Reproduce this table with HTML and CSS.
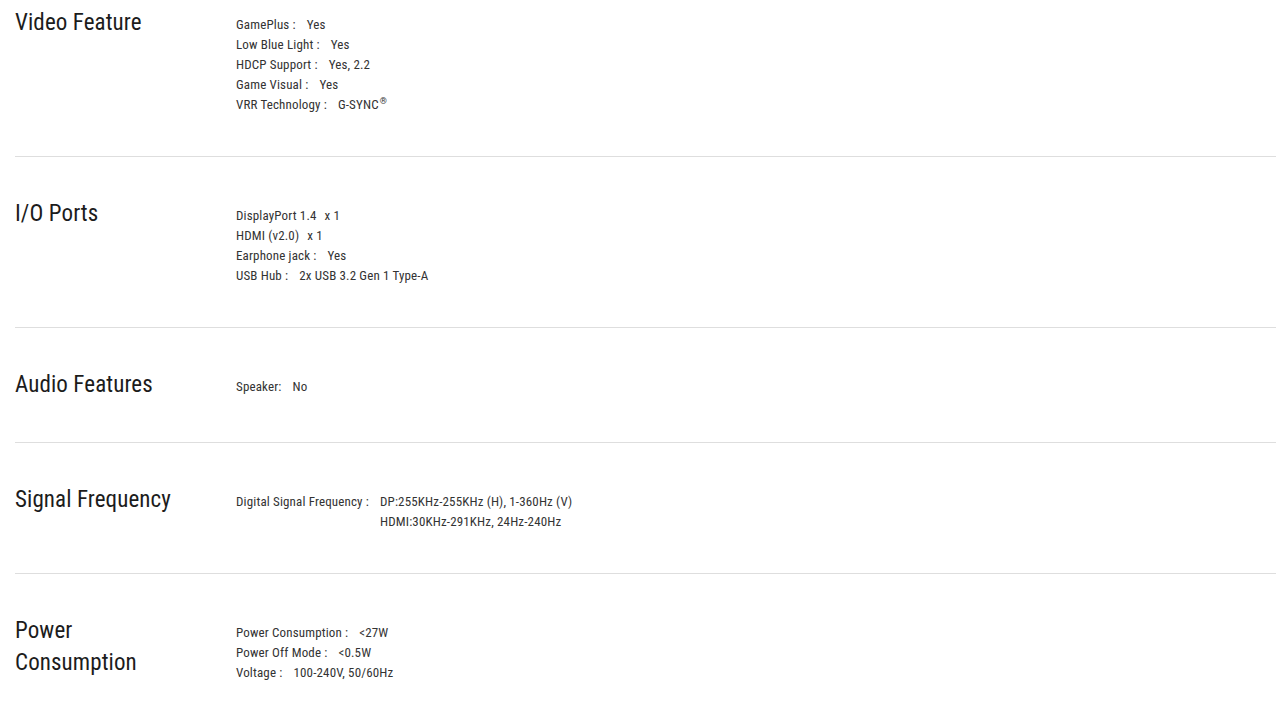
FILE: index.html
```html
<!DOCTYPE html>
<html>
<head>
<meta charset="utf-8">
<link rel="stylesheet" href="styles.css">
</head>
<body>
<div class="specs">
  <section class="group first">
    <h2 class="title">Video Feature</h2>
    <ul class="list">
      <li><span class="k">GamePlus :</span><span class="v">Yes</span></li>
      <li><span class="k">Low Blue Light :</span><span class="v">Yes</span></li>
      <li><span class="k">HDCP Support :</span><span class="v">Yes, 2.2</span></li>
      <li><span class="k">Game Visual :</span><span class="v">Yes</span></li>
      <li><span class="k">VRR Technology :</span><span class="v">G-SYNC<sup class="reg">®</sup></span></li>
    </ul>
  </section>
  <section class="group">
    <h2 class="title">I/O Ports</h2>
    <ul class="list">
      <li><span class="k nc">DisplayPort 1.4</span><span class="v">x 1</span></li>
      <li><span class="k nc">HDMI (v2.0)</span><span class="v">x 1</span></li>
      <li><span class="k">Earphone jack :</span><span class="v">Yes</span></li>
      <li><span class="k">USB Hub :</span><span class="v">2x USB 3.2 Gen 1 Type-A</span></li>
    </ul>
  </section>
  <section class="group">
    <h2 class="title">Audio Features</h2>
    <ul class="list">
      <li><span class="k">Speaker:</span><span class="v">No</span></li>
    </ul>
  </section>
  <section class="group">
    <h2 class="title">Signal Frequency</h2>
    <ul class="list">
      <li><span class="k">Digital Signal Frequency :</span><span class="v multi"><span>DP:255KHz-255KHz (H), 1-360Hz (V)</span><span>HDMI:30KHz-291KHz, 24Hz-240Hz</span></span></li>
    </ul>
  </section>
  <section class="group">
    <h2 class="title">Power<br>Consumption</h2>
    <ul class="list">
      <li><span class="k">Power Consumption :</span><span class="v">&lt;27W</span></li>
      <li><span class="k">Power Off Mode :</span><span class="v">&lt;0.5W</span></li>
      <li><span class="k">Voltage :</span><span class="v">100-240V, 50/60Hz</span></li>
    </ul>
  </section>
</div>
</body>
</html>
```
FILE: styles.css
```css
html, body {
  margin: 0;
  padding: 0;
  background: #fff;
}
body {
  font-family: "Roboto Condensed", Roboto, "Liberation Sans", sans-serif;
  font-stretch: 75%;
  color: #222;
}
.specs {
  padding: 0 1px 0 15px;
}
.group {
  display: flex;
  align-items: flex-start;
  border-top: 1px solid #dedede;
  padding: 41px 0 41px;
}
.group.first {
  border-top: none;
  padding-top: 7px;
}
.title {
  width: 221px;
  flex: none;
  margin: 0;
  font-size: 23px;
  line-height: 32px;
  font-weight: 400;
  letter-spacing: 0.1px;
  color: #1c1c1c;
}
.list {
  list-style: none;
  margin: 8px 0 0;
  padding: 0;
  font-size: 13px;
  line-height: 20px;
  letter-spacing: 0.15px;
  color: #333;
}
.list li {
  display: flex;
  align-items: flex-start;
}
.k {
  margin-right: 11px;
}
.k.nc {
  margin-right: 8px;
}
.multi {
  display: flex;
  flex-direction: column;
}
.reg {
  font-size: 9px;
  line-height: 0;
  vertical-align: 5px;
  margin-left: 1px;
}
```
